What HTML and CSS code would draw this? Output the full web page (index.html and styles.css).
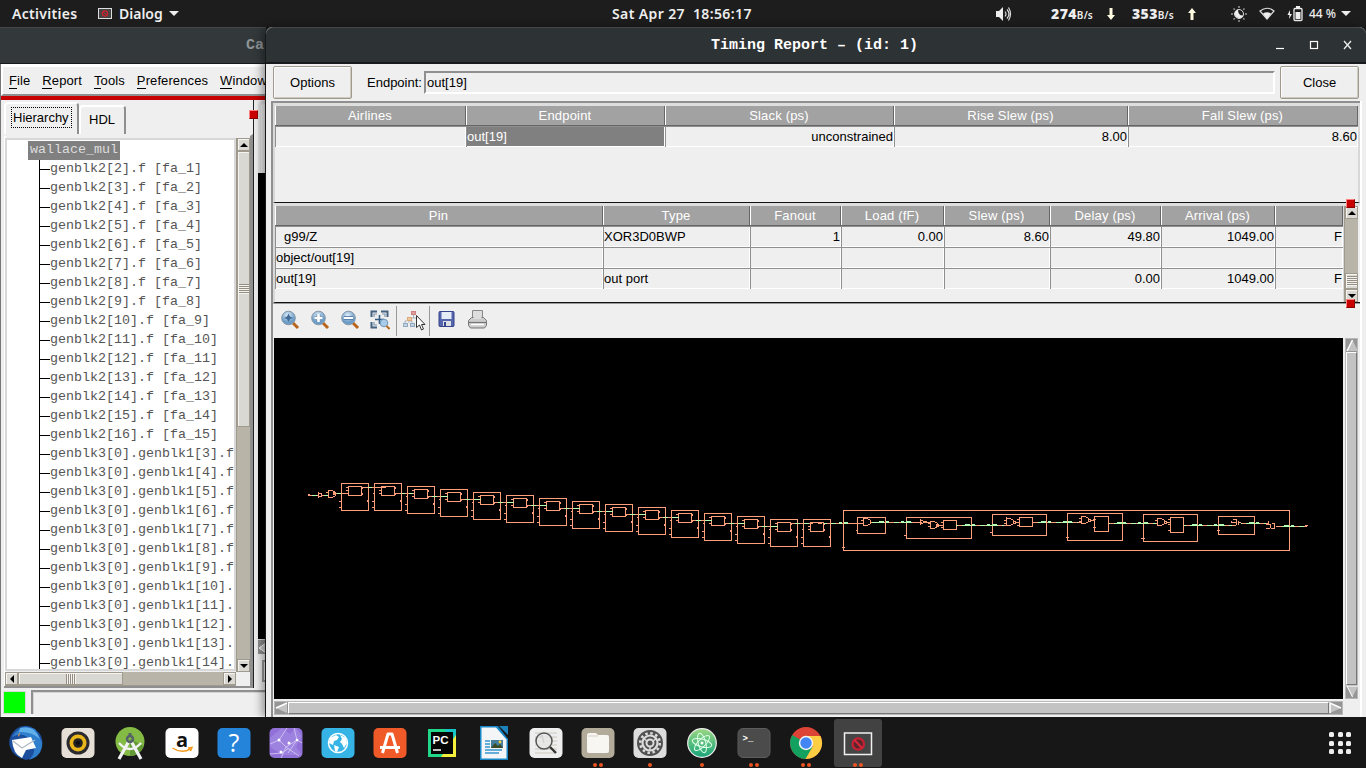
FILE: index.html
```html
<!DOCTYPE html>
<html lang="en">
<head>
<meta charset="utf-8">
<title>Timing Report</title>
<link rel="stylesheet" href="styles.css">
</head>
<body>
<div class="screen">
<header class="topbar">
  <span class="activities">Activities</span>
  <svg class="app-mini" width="14" height="12" viewBox="0 0 14 12"><rect x=".5" y=".5" width="13" height="10" fill="#444" stroke="#ddd"/><circle cx="7" cy="5.500" r="2.600" fill="none" stroke="#c8222b" stroke-width="1.400"/><path d="M5 4l4 3" stroke="#c8222b"/></svg>
  <span class="app-name">Dialog</span>
  <i class="caret"></i>
  <span class="clock">Sat Apr 27&nbsp; 18:56:17</span>
  <div class="tray">
    <svg width="16" height="14" viewBox="0 0 16 14"><path d="M0 4h3l4-4v14l-4-4H0z" fill="#eee"/><path d="M9 4.500q2 2.500 0 5M11 2.500q4 4.500 0 9M12.500 .5q4 6.500 0 13" fill="none" stroke="#ddd" stroke-width="1.200"/></svg>
    <span class="net net-down"><b>274</b><small>B/s</small></span>
    <svg class="arr1" width="8" height="12" viewBox="0 0 8 12"><path d="M2.500 0h3v7H8l-4 5-4-5h2.500z" fill="#fffbe0"/></svg>
    <span class="net net-up"><b>353</b><small>B/s</small></span>
    <svg class="arr2" width="8" height="12" viewBox="0 0 8 12"><path d="M2.500 12h3V5H8L4 0 0 5h2.500z" fill="#fffbe0"/></svg>
    <svg class="sun" width="16" height="16" viewBox="0 0 16 16"><circle cx="8" cy="8" r="4.500" fill="none" stroke="#ddd"/><path d="M7 3.500a4.500 4.500 0 1 0 5.500 6Q7 10 7 3.500z" fill="#eee"/><path d="M8 0v2M8 14v2M0 8h2M14 8h2M2.500 2.500l1.300 1.300M12.200 12.200l1.300 1.300M2.500 13.500l1.300-1.300M12.200 3.800l1.300-1.300" stroke="#999" stroke-width="1.500"/></svg>
    <svg class="wifi" width="16" height="13" viewBox="0 0 16 13"><path d="M1 4q7-5.500 14 0L8 12z" fill="none" stroke="#ddd" stroke-width="1.200"/><path d="M4 6.500q4-2.500 8 0L8 12z" fill="#eee"/></svg>
    <svg class="batt" width="16" height="16" viewBox="0 0 16 16"><path d="M3 4L.5 9h2L2 13l3-5H3z" fill="#eee"/><rect x="7" y="2.500" width="8" height="12" rx="1" fill="none" stroke="#eee" stroke-width="1.300"/><path d="M9 0h4v2H9zM8.500 6h5v7h-5z" fill="#eee"/></svg>
    <span class="pct">44 %</span>
    <i class="caret"></i>
  </div>
</header>

<section class="window back">
  <div class="titlebar"><span>Ca</span></div>
  <div class="back-body">
    <nav class="menubar"><span><u>F</u>ile</span><span><u>R</u>eport</span><span><u>T</u>ools</span><span><u>P</u>references</span><span><u>W</u>indow</span></nav>
    <div class="redbar"></div>
    <div class="back-split">
      <div class="left-pane">
        <div class="tabs"><div class="tab on"><span>Hierarchy</span></div><div class="tab off">HDL</div></div>
        <div class="tree-page">
          <div class="tree-col">
            <div class="tree"><div class="root">wallace_mul</div><ul>
<li>genblk2[2].f [fa_1]</li><li>genblk2[3].f [fa_2]</li><li>genblk2[4].f [fa_3]</li><li>genblk2[5].f [fa_4]</li><li>genblk2[6].f [fa_5]</li><li>genblk2[7].f [fa_6]</li><li>genblk2[8].f [fa_7]</li><li>genblk2[9].f [fa_8]</li><li>genblk2[10].f [fa_9]</li><li>genblk2[11].f [fa_10]</li><li>genblk2[12].f [fa_11]</li><li>genblk2[13].f [fa_12]</li><li>genblk2[14].f [fa_13]</li><li>genblk2[15].f [fa_14]</li><li>genblk2[16].f [fa_15]</li><li>genblk3[0].genblk1[3].f</li><li>genblk3[0].genblk1[4].f</li><li>genblk3[0].genblk1[5].f</li><li>genblk3[0].genblk1[6].f</li><li>genblk3[0].genblk1[7].f</li><li>genblk3[0].genblk1[8].f</li><li>genblk3[0].genblk1[9].f</li><li>genblk3[0].genblk1[10].</li><li>genblk3[0].genblk1[11].</li><li>genblk3[0].genblk1[12].</li><li>genblk3[0].genblk1[13].</li><li>genblk3[0].genblk1[14].</li></ul></div>
            <div class="hbar"><div class="sb"><svg width="6" height="8"><path d="M5 0v8L1 4z"/></svg></div><div class="hthumb"><i class="grip"></i></div><div class="fill"></div><div class="sb"><svg width="6" height="8"><path d="M1 0v8l4-4z"/></svg></div></div>
          </div>
          <div class="vbar"><div class="sb"><svg width="8" height="6"><path d="M0 5h8L4 1z"/></svg></div><div class="vthumb"><i class="grip v"></i></div><div class="fill"></div><div class="sb"><svg width="8" height="6"><path d="M0 1h8L4 5z"/></svg></div></div>
        </div>
      </div>
      <div class="right-pane"><div class="rp-top"></div><div class="rp-black"></div><div class="rp-arrow"><svg width="8" height="12"><path d="M8 1L1 6l7 5" fill="#ccc" stroke="#fff"/></svg></div><div class="rp-end"></div></div>
      <i class="sash back-sash"></i>
    </div>
    <div class="status"><i class="led"></i><div class="status-field"></div></div>
  </div>
</section>

<section class="window front">
  <div class="titlebar"><span>Timing Report – (id: 1)</span>
    <svg class="winbtns" width="78" height="12" viewBox="0 0 78 12"><path d="M1 9.500h8" stroke="#fff" stroke-width="1.200"/><rect x="35.500" y="2.500" width="7" height="7" fill="none" stroke="#fff" stroke-width="1.200"/><path d="M69 2l7 8M76 2l-7 8" stroke="#eee" stroke-width="1.300"/></svg>
  </div>
  <div class="front-body">
    <div class="controls"><button class="btn">Options</button><label>Endpoint:</label><div class="field">out[19]</div><button class="btn">Close</button></div>
    <div class="frame">
      <div class="pane p1">
        <div class="table t1">
          <b>Airlines</b><b>Endpoint</b><b>Slack (ps)</b><b>Rise Slew (ps)</b><b>Fall Slew (ps)</b>
          <span></span><span class="l sel">out[19]</span><span>unconstrained</span><span>8.00</span><span>8.60</span>
        </div>
      </div>
      <div class="pane p2">
        <div class="table t2">
          <b>Pin</b><b>Type</b><b>Fanout</b><b>Load (fF)</b><b>Slew (ps)</b><b>Delay (ps)</b><b>Arrival (ps)</b><b></b>
          <span class="l ind">g99/Z</span><span class="l">XOR3D0BWP</span><span>1</span><span>0.00</span><span>8.60</span><span>49.80</span><span>1049.00</span><span>F</span>
          <span class="l">object/out[19]</span><span></span><span></span><span></span><span></span><span></span><span></span><span></span>
          <span class="l">out[19]</span><span class="l">out port</span><span></span><span></span><span></span><span>0.00</span><span>1049.00</span><span>F</span>
        </div>
        <div class="vbar small"><div class="sb"><svg width="8" height="6"><path d="M0 5h8L4 1z"/></svg></div><div class="fill"></div><div class="vthumb"><i class="grip v"></i></div><div class="sb"><svg width="8" height="6"><path d="M0 1h8L4 5z"/></svg></div></div>
        <i class="sash s1"></i><i class="sash s2"></i>
      </div>
      <div class="toolbar">
        <svg width="20" height="20"><use href="#mag"/><path d="M8.500 3.500L10 6.500l3 1.500-3 1-1.500 3L7 9 4 8l3-1.500z" fill="#3f6a98"/></svg>
        <svg width="20" height="20"><use href="#mag"/><path d="M8.500 4v8M4.500 8h8" stroke="#5b84ab" stroke-width="4"/><path d="M8.500 4v8M4.500 8h8" stroke="#fff" stroke-width="2.600"/></svg>
        <svg width="20" height="20"><use href="#mag"/><path d="M4 8h9" stroke="#49749e" stroke-width="3.600"/><path d="M4 8h9" stroke="#fff" stroke-width="2"/></svg>
        <svg width="20" height="20"><path d="M1.500 7V1.500H7M11 1.500h6.500V7M1.500 12v5.500H7" fill="none" stroke="#44627f" stroke-width="2"/><path d="M4 7V4h3M12 4h3v3M4 12v3h3" fill="none" stroke="#7d97b0" stroke-width="1.200"/><path d="M9.500 5v9M5 9.500h9" stroke="#315b85" stroke-width="1.600"/><circle cx="14" cy="13" r="3.800" fill="#a8cbe8" stroke="#7097b9"/><path d="M16.500 16l3 3" stroke="#b96a20" stroke-width="2"/></svg>
        <i class="sep a"></i>
        <svg width="24" height="22"><path d="M10.500 5v3M6 8v5M6 8h9v4M4 11H2v3M7 11h2v3" fill="none" stroke="#a9b4be"/><rect x="8.500" y="1.500" width="4" height="3" fill="#df9a9a" stroke="#cd8383"/><rect x="4.500" y="7.500" width="4" height="3" fill="#efcaa0" stroke="#d9a97a"/><rect x=".5" y="13.500" width="4" height="3" fill="#c5d4e2" stroke="#91a9c0"/><rect x="7.500" y="13.500" width="4" height="3" fill="#c5d4e2" stroke="#91a9c0"/><path d="M13.500 5.500v12l3-2.500 2 5 2-1-2-4.500h3.500z" fill="#fff" stroke="#333"/></svg>
        <i class="sep b"></i>
        <svg width="18" height="18"><rect x="1" y="1.500" width="15" height="15" rx="1" fill="#5565ad" stroke="#34438b"/><path d="M3.500 2h10v7h-10z" fill="#e4edf6"/><path d="M5 11h8v5H5z" fill="#dcdfe4"/><path d="M6 12h2v4H6z" fill="#34438b"/></svg>
        <svg class="printer" width="22" height="20"><path d="M5.500 .5h10v9h-10z" fill="#ddd" stroke="#888"/><path d="M1.500 10.500l3-3h12l3 3v5l-2 2.500h-14l-2-2.500z" fill="#ccc" stroke="#777"/><path d="M6.500 2h8v7h-8z" fill="#ddd"/><path d="M2 12.500h17" stroke="#777" stroke-width="1.200"/><path d="M4 14.500h13" stroke="#fff" stroke-width="1.500"/></svg>
      </div>
      <div class="canvas-row">
        <svg class="schematic" width="1069" height="361" viewBox="274 338 1069 361" shape-rendering="crispEdges">
          <defs>
            <g id="blk" class="o"><path d="M.5.5h27v27h-27zM7.500 3.500h13v9h-13zM-2 18.500h3M-2 24.500h3M26.500 17v2M-1 10.500h2M5 4.500h2M5 7.500h2M5 10.500h2M20.500 4h1v2M21.500 10v2"/></g>
            <path id="w" d="M21 10.500h20"/>
            <path id="gate" d="M0 -3.500h5M5 -2.500h2M7.500 -2v4M5 2.500h2M0 3.500h5M.5 -3v6M-2 -1.500h2M-2 1.500h2"/>
            <path id="bubble" d="M.5 -1.500h2v2h-2z"/>
          </defs>
          <use href="#blk" x="341" y="483"/><use href="#blk" x="374" y="483"/><use href="#blk" x="407" y="486"/><use href="#blk" x="440" y="489"/><use href="#blk" x="473" y="492"/><use href="#blk" x="506" y="495"/><use href="#blk" x="539" y="498"/><use href="#blk" x="572" y="501"/><use href="#blk" x="605" y="504"/><use href="#blk" x="638" y="507"/><use href="#blk" x="671" y="510"/><use href="#blk" x="704" y="513"/><use href="#blk" x="737" y="516"/><use href="#blk" x="770" y="519"/><use href="#blk" x="803" y="519"/>
          <g class="o">
            <path d="M843.500 510.500h446v40h-446zM857.500 517.500h28v16h-28zM906.500 517.500h65v21h-65zM992.500 514.500h54v21h-54zM1067.500 513.500h55v27h-55zM1143.500 514.500h54v27h-54zM1218.500 516.500h36v18h-36z"/>
            <path d="M943.500 520.500h13v9h-13zM1019.500 517.500h13v9h-13zM1094.500 516.500h14v15h-14zM1170.500 517.500h13v15h-13z"/>
            <path d="M842 547.500h3M856 530.500h2M904 535.500h3M990 532.500h3M1066 537.500h3M1141 538.500h4M1217 530.500h3M941 522.500h3M941 527.500h3M1017 519.500h3M1017 525.500h3M1093 519.500h3M1093 527.500h3M1168 519.500h3M1168 524.500h3M1168 530.500h3"/>
            <path d="M308 494.500h2M308 495.500h10M318.500 492v6M319 493.500h2v3h-2M321 495.500h7M334 493.500h14M363 487.500h18M831 523.500h32M871 522.500h49M920.500 519v6M921 520.500h2M921 523.500h2M923 521.500h3v1h-3M926 522.500h5M939 525.500h4M956 525.500h51M1006.500 517v3M1016 522.500h3M1032 522.500h49M1091 520.500h3M1108 523.500h48M1167 522.500h3M1183 525.500h53M1236.500 525v-3M1241 523.500h27M1268.500 521v3M1276 526.500h31M1305 525.500h3"/>
            <use href="#gate" x="328" y="494"/><use href="#bubble" x="333" y="494"/>
            <use href="#gate" x="863" y="522"/>
            <use href="#gate" x="930" y="525"/><use href="#bubble" x="936" y="526"/>
            <use href="#gate" x="1006" y="522"/><use href="#bubble" x="1013" y="523"/>
            <use href="#gate" x="1081" y="520"/><use href="#bubble" x="1088" y="521"/>
            <use href="#gate" x="1157" y="522"/><use href="#bubble" x="1164" y="523"/>
            <path d="M1232.500 519.500h4v3h-5v-2M1236 519.500v2M1238.500 521v4M1239 522.500h2M1266 524.500h5M1270.500 524v4M1266 528.500h4M1272 523.500h2v5h-3"/>
          </g>
          <g class="g">
            <path d="M312 495.500h5M324 495.500h4M337 493.500h4M368 487.500h4M396 493.500h5M402 493.500h11"/>
            <use href="#w" x="407" y="486"/><use href="#w" x="440" y="489"/><use href="#w" x="473" y="492"/><use href="#w" x="506" y="495"/><use href="#w" x="539" y="498"/><use href="#w" x="572" y="501"/><use href="#w" x="605" y="504"/><use href="#w" x="638" y="507"/><use href="#w" x="671" y="510"/><use href="#w" x="704" y="513"/><use href="#w" x="737" y="516"/>
            <path d="M791 523.500h20M824 523.500h13M872 522.500h12M891 522.500h22M956 525.500h48M1034 522.500h12M1054 522.500h24M1109 523.500h47M1184 525.500h48M1241 523.500h25M1278 526.500h26"/>
            <path d="M839 523h3M844 523h4M879 522h5M886 522h3M901 522h3M906 522h5M965 525h5M972 525h3M987 525h3M992 525h5M1041 522h5M1048 522h3M1063 522h4M1068 522h4M1117 523h5M1123 523h3M1138 523h3M1144 523h4M1192 525h5M1199 525h3M1214 525h3M1219 525h5M1249 523h5M1256 523h3M1284 526h5M1291 526h3" stroke-width="2"/>
          </g>
          <g class="o" stroke-dasharray="4 5"><path d="M386 487.500h-20M396 493.500h17M428 496.500h18M461 499.500h18M494 502.500h18M527 505.500h18M560 508.500h18M593 511.500h18M626 514.500h18M659 517.500h18M692 520.500h18M725 523.500h18M758 526.500h18M791 523.500h46M890 522.500h11M912 522.500h10M958 525.500h6M976 525.500h10M998 525.500h8M1034 522.500h6M1052 522.500h10M1073 522.500h6M1110 523.500h6M1127 523.500h10M1149 523.500h7M1186 525.500h6M1203 525.500h10M1225 525.500h10M1242 523.500h6M1260 523.500h8M1278 526.500h6M1295 526.500h11"/></g>
        </svg>
        <div class="mbar mv"><svg width="13" height="13"><path d="M6.500 1L12 12H1z" fill="#c3c3c3"/><path d="M6.500 1L1 12" stroke="#fff" stroke-width="1.500"/></svg><i></i><svg width="13" height="13"><path d="M1 1h11L6.500 12z" fill="#c3c3c3"/><path d="M0 1h12M1 1l5.500 11" stroke="#fff"/></svg></div>
      </div>
      <div class="mbar mh"><svg width="13" height="12"><path d="M1 6L12 1v10z" fill="#c3c3c3"/><path d="M1 6l11-5" stroke="#fff" stroke-width="1.500"/></svg><i></i><svg width="13" height="12"><path d="M1 1v10l11-5z" fill="#c3c3c3"/><path d="M1 11V1l11 5" fill="none" stroke="#fff" stroke-width="1.500"/></svg></div>
    </div>
  </div>
</section>

<footer class="dock">
  <div class="app"><svg viewBox="0 0 36 36"><path d="M8 4Q18-3 28 5q8 6 6 17-3 11-16 13Q5 32 2 22-1 12 8 4z" fill="#1b4f9e"/><path d="M4 12Q12-1 27 4l7 13q1 14-13 18 8-8 4-18Q15 5 4 12z" fill="#2f7fcd"/><path d="M12 3q14-4 20 11-9-8-21-7z" fill="#62b0ea"/><path d="M10 10l2-3-1 5z" fill="#f0a050"/><path d="M4 15l19-3 5 11-10 2-4 8Q5 29 4 15z" fill="#fff"/><path d="M5 16l9 7 13-8" fill="none" stroke="#aeb9c5" stroke-width="1.200"/></svg></div>
  <div class="app"><svg viewBox="0 0 36 36"><rect x="1.500" y="3" width="33" height="30" rx="5" fill="#e6dfd5"/><circle cx="18" cy="18" r="11.500" fill="#2b2b2f"/><circle cx="18" cy="18" r="8.500" fill="#eab71b"/><circle cx="18" cy="18" r="4.800" fill="#222"/><circle cx="18" cy="18" r="2" fill="#0d0d16"/></svg></div>
  <div class="app"><svg viewBox="0 0 36 36"><circle cx="18" cy="16.500" r="14.500" fill="#83bb45"/><path d="M18 14l14 7q-5 10-14 10z" fill="#649a36"/><path d="M17 16L7 34M19 16l10 18" stroke="#f1f3f5" stroke-width="3.200"/><path d="M7 18q11 12 22 0" fill="none" stroke="#f1f3f5" stroke-width="2.400"/><circle cx="18" cy="14" r="3" fill="none" stroke="#566269" stroke-width="2.400"/><path d="M18 8v3" stroke="#566269" stroke-width="3"/></svg></div>
  <div class="app"><svg viewBox="0 0 36 36"><rect x="1.500" y="3" width="33" height="30" rx="5" fill="#fff"/><text x="18" y="22" class="amz">a</text><path d="M8.500 23q9 6 18 1M24 23l4-.5-1.500 3.500" fill="none" stroke="#f79b1c" stroke-width="1.500"/></svg></div>
  <div class="app"><svg viewBox="0 0 36 36"><rect x="1.500" y="3" width="33" height="30" rx="5" fill="#2484da"/><text x="18" y="27" class="help">?</text></svg></div>
  <div class="app"><svg viewBox="0 0 36 36"><rect x="1.500" y="3" width="33" height="30" rx="5" fill="#9170d8"/><path d="M2 13L14 3l8 6 6-6 6 8-6 11 6 8H15L2 22z" fill="#a991e8" opacity=".55"/><path d="M2 19l9-4 7 7 11-7 5 3M11 15l8-12M18 22l-5 11M18 22l13 9M29 15l-3-12M29 15l-9 13M2 29l12-1 7-5" stroke="#cdbef2" fill="none"/><g fill="#fff"><circle cx="11" cy="15" r="1.500"/><circle cx="21" cy="18" r="1.500"/><circle cx="29" cy="15" r="1.300"/><circle cx="13" cy="27" r="1.500"/></g></svg></div>
  <div class="app"><svg viewBox="0 0 36 36"><rect x="1.500" y="3" width="33" height="30" rx="5" fill="#35b4e5"/><circle cx="18" cy="18" r="9.500" fill="none" stroke="#fff" stroke-width="1.500"/><path d="M10 13l6-3 3 2-2 3-3 1-1 4-4-2zM14 20l5 2-2 5-2-1zM20 10l6 3 1 5-3 5-2-4-2-2 2-3z" fill="#fff"/></svg></div>
  <div class="app"><svg viewBox="0 0 36 36"><rect x="1.500" y="3" width="33" height="30" rx="5" fill="#f05a28"/><path d="M10.500 28l5.500-19h4l5.500 19M8 22.500h20" fill="none" stroke="#fff" stroke-width="3" stroke-linejoin="round"/></svg></div>
  <div class="app"><svg viewBox="0 0 36 36"><path d="M4 4h28v28H4z" fill="#21d789"/><path d="M20 4h12v14z" fill="#17c5c7"/><path d="M32 10v22H17z" fill="#f4ee3c"/><path d="M7 7h22v22H7z" fill="#050505"/><text x="8.500" y="18.500" class="pc">PC</text><path d="M9 25h8" stroke="#fff" stroke-width="1.500"/></svg></div>
  <div class="app"><svg viewBox="0 0 36 36"><path d="M4 1h18l10 13v21H4z" fill="#1786c6"/><path d="M5.500 2.500H20l10.500 12v19h-25z" fill="#f3f5f6"/><path d="M23 1h9v9z" fill="#1a82bd"/><path d="M9 16h5M9 19h5M9 22h5M9 25h17M9 28h14" stroke="#3695cf" stroke-width="1.300"/><path d="M15 15h12v8H15z" fill="#467e9e"/><path d="M15 23l4-5 3 3 2-2 3 4z" fill="#3a4b25"/><circle cx="24" cy="17" r="1.400" fill="#f1d33c"/></svg></div>
  <div class="app"><svg viewBox="0 0 36 36"><rect x="1.500" y="3" width="33" height="30" rx="5" fill="#eee"/><path d="M7 8h22M7 12h22M7 16h22M7 20h22M7 24h22M7 28h20" stroke="#ccc8bb"/><circle cx="16" cy="16" r="8" fill="#e6e6e6" fill-opacity=".85" stroke="#555" stroke-width="1.500"/><path d="M22 22l6 6" stroke="#333" stroke-width="2.400"/><path d="M12 13l2-3 2 8" fill="none" stroke="#ccc"/></svg></div>
  <div class="app"><svg viewBox="0 0 36 36"><rect x="1.500" y="3" width="33" height="30" rx="5" fill="#b3ab99"/><path d="M7 11q0-3 2-3h7l2 2h9q2 0 2 2v14q0 2-2 2H9q-2 0-2-2z" fill="#f8f6f3"/><path d="M8 11h10" stroke="#d6d0c4"/></svg><em></em><em></em></div>
  <div class="app"><svg viewBox="0 0 36 36"><rect x="1.500" y="3" width="33" height="30" rx="5" fill="#ddd"/><circle cx="18" cy="18" r="13" fill="#505050"/><circle cx="18" cy="18" r="9.800" fill="none" stroke="#ddd" stroke-width="2.500" stroke-dasharray="2.500 2.630"/><circle cx="18" cy="18" r="7.500" fill="#505050" stroke="#ddd" stroke-width="2.200"/><circle cx="18" cy="18" r="3.500" fill="none" stroke="#ddd" stroke-width="2"/><path d="M18 21v5M15 16l-4-3M21 16l4-3" stroke="#ddd" stroke-width="1.500"/></svg><em></em></div>
  <div class="app"><svg viewBox="0 0 36 36"><defs><linearGradient id="at" x2="0" y2="1"><stop stop-color="#9bd783"/><stop offset="1" stop-color="#16a47a"/></linearGradient></defs><circle cx="18" cy="18" r="14.300" fill="url(#at)" stroke="#eee" stroke-width="1.200"/><g fill="none" stroke="#dfffe9"><ellipse cx="18" cy="18" rx="3.800" ry="10" transform="rotate(-15 18 18)"/><ellipse cx="18" cy="18" rx="3.800" ry="10" transform="rotate(45 18 18)"/><ellipse cx="18" cy="18" rx="3.800" ry="10" transform="rotate(105 18 18)"/></g><circle cx="18" cy="18" r="1.500" fill="#fff"/></svg><em></em></div>
  <div class="app"><svg viewBox="0 0 36 36"><rect x="2" y="3.500" width="32" height="29" rx="5" fill="#4b4b4b" stroke="#5d5d5d"/><text x="6.500" y="16" class="term">&gt;_</text></svg><em></em><em></em></div>
  <div class="app"><svg viewBox="0 0 36 36"><circle cx="18" cy="18" r="16" fill="#dd4436"/><path d="M18 18L4.200 10A16 16 0 0 0 17.500 34L25 22z" fill="#12a15e"/><path d="M18 11h14.500A16 16 0 0 1 17.500 34L25 21z" fill="#ffce42"/><circle cx="18" cy="18" r="7.200" fill="#f4f4f4"/><circle cx="18" cy="18" r="5.700" fill="#4285f4"/></svg><em></em><em></em></div>
  <div class="app active"><svg viewBox="0 0 36 36"><rect x="4.500" y="8" width="27" height="21.500" fill="#454545" stroke="#f1f1f1" stroke-width="1.500"/><circle cx="18.300" cy="19" r="5.700" fill="#5b252b" stroke="#c92034" stroke-width="2.200"/><path d="M14.500 15l7.500 8" stroke="#d5283a" stroke-width="2.200"/></svg><em></em><em></em></div>
  <div class="grid9"><i></i><i></i><i></i><i></i><i></i><i></i><i></i><i></i><i></i></div>
</footer>
</div>
<svg width="0" height="0" class="library"><defs><radialGradient id="lens" cx=".45" cy=".3"><stop stop-color="#e4f0fa"/><stop offset="1" stop-color="#6d9cc7"/></radialGradient><g id="mag"><path d="M12 12l6 6" stroke="#ba641b" stroke-width="3"/><circle cx="8.500" cy="8" r="6.800" fill="url(#lens)" stroke="#8598a8"/></g></defs></svg>
</body>
</html>
```
FILE: styles.css
```css
* { box-sizing: border-box; }
body { margin: 0; background: #171717; font: 13px/16px "Liberation Sans", Arial, sans-serif; color: #000; }
i, em { display: block; font-style: normal; }
svg { display: block; flex: none; }
.screen { position: relative; width: 1366px; height: 768px; overflow: hidden; display: flex; flex-direction: column; }
.library { position: absolute; }

.topbar { height: 27px; background: #1d1d1d; color: #eee; display: flex; align-items: center; padding: 0 15px 0 12px; font: 600 14px/27px "Noto Sans", sans-serif; white-space: pre; }
.activities { width: 86px; letter-spacing: .3px; }
.app-mini { margin-right: 7px; }
.app-name { width: 44px; }
.caret { border: 5px solid transparent; border-top-color: #eee; border-bottom: 0; margin-left: 6px; }
.clock { margin-left: 433px; width: 150px; letter-spacing: .38px; }
.tray { display: flex; align-items: center; margin-left: auto; }
.net { font-size: 14px; margin-left: 39px; display: flex; align-items: baseline; letter-spacing: .4px; padding-top: 1px; }
.net small { font-size: 10px; letter-spacing: .2px; }
.net-up { margin-left: 17px; }
.arr1 { margin-left: 14px; }
.arr2 { margin-left: 14px; }
.sun { margin-left: 35px; }
.wifi { margin-left: 12px; }
.batt { margin-left: 12px; }
.pct { font-size: 12px; margin-left: 6px; font-weight: 500; }
.tray .caret { margin-left: 5px; }

.window { position: absolute; top: 27px; height: 690px; display: flex; flex-direction: column; }
.back { left: 0; width: 266px; overflow: hidden; }
.front { left: 265px; width: 1101px; border-left: 1px solid #15191a; border-radius: 7px 7px 0 0; box-shadow: -3px 0 10px rgba(0,0,0,.4); background: #efefef; }
.titlebar { height: 37px; flex: none; background: #2d3234; border-top: 1px solid #42484a; border-bottom: 2px solid #17191a; display: flex; align-items: center; justify-content: center; color: #fff; font: bold 15px/34px "Liberation Mono", monospace; position: relative; white-space: pre; }
.titlebar span { padding-top: 1px; }
.front .titlebar { border-radius: 7px 7px 0 0; padding-right: 3px; }
.back .titlebar { background: #33393b; color: #8e9496; justify-content: flex-end; padding-right: 2px; border-bottom-width: 1px; }
.winbtns { position: absolute; right: 13px; top: 11px; }

.back-body { flex: 1; border-left: 1px solid #777; background: #efefef; display: flex; flex-direction: column; }
.menubar { height: 32px; border: 2px solid #fff; border-width: 3px 0 0 2px; border-bottom: 2px solid #8f8f8f; display: flex; gap: 12px; padding: 5px 0 0 6px; line-height: 18px; white-space: nowrap; letter-spacing: .1px; }
.menubar u { text-decoration: none; box-shadow: 0 1px #000; }
.redbar { height: 4px; background: #c80000; }
.back-split { display: flex; height: 588px; position: relative; }
.left-pane { width: 253px; padding: 2px 0 0 3px; border-right: 1px solid #222; display: flex; flex-direction: column; }
.tabs { display: flex; height: 32px; align-items: flex-end; }
.tab { border: 2px solid #fff; border-right-color: #8f8f8f; border-bottom: 0; border-radius: 4px 4px 0 0; }
.tab.on { width: 75px; height: 32px; padding: 3px 0 0 5px; }
.tab.on span { display: block; width: 61px; height: 21px; border: 1px dotted #000; padding-left: 1px; line-height: 20px; }
.tab.off { width: 47px; height: 29px; padding: 5px 0 0 8px; box-shadow: 0 2px #fff; }
.tree-page { display: flex; height: 554px; border-right: 3px solid #8f8f8f; border-bottom: 2px solid #8f8f8f; border-top: 2px solid #efefef; padding-top: 2px; }
.tabs + .tree-page { box-shadow: inset 2px 0 #fff; }
.tree-col { width: 232px; padding-left: 1px; }
.tree { height: 533px; border: 2px solid #d8d8d8; background: #fff; overflow: hidden; padding: 1px 0 0 21px; font: 13.333px/18px "Liberation Mono", monospace; color: #555; }
.root { background: #808080; color: #ddd; width: 92px; height: 19px; padding-left: 2px; }
.tree ul { list-style: none; margin: 0 0 0 11px; padding: 0; border-left: 1px solid #000; }
.tree li { height: 19px; display: flex; white-space: pre; }
.tree li::before { content: ""; width: 10px; height: 1px; background: #000; margin-top: 9px; }
.sb, .hthumb, .vthumb { background: #dad8d2; border: 1px solid #a09a8e; box-shadow: inset 1px 1px #f5f4f1; flex: none; display: flex; align-items: center; justify-content: center; }
.sb { width: 13px; height: 13px; }
.fill { flex: 1; background: #b9b4a8; }
.hbar { display: flex; height: 14px; margin-top: 1px; border: 1px solid #a09a8e; border-width: 0 0 1px; }
.hthumb { width: 105px; }
.vbar { width: 14px; height: 534px; display: flex; flex-direction: column; border-left: 1px solid #a09a8e; background: #b9b4a8; }
.vthumb { height: 276px; width: 13px; }
.grip { width: 10px; height: 10px; background: repeating-linear-gradient(90deg, #948e82 0 1px, #f5f4f1 1px 2px); }
.grip.v { background: repeating-linear-gradient(#948e82 0 1px, #f5f4f1 1px 2px); }
.right-pane { flex: 1; padding: 1px 0 0 4px; }
.rp-top { height: 72px; border: 3px solid #e0e0e0; border-right: 0; border-bottom: 0; border-radius: 5px 0 0; }
.rp-black { height: 466px; background: #000; }
.rp-arrow { height: 15px; padding: 2px 0; background: #8f8f8f; border-top: 1px solid #ddd; }
.rp-end { margin: 6px 0 0 4px; height: 22px; border: 2px solid #999; border-right: 0; }
.sash { position: absolute; width: 9px; height: 9px; background: #c80000; border: 1px solid #ff8080; border-right-color: #8b0000; border-bottom-color: #8b0000; z-index: 2; }
.back-sash { left: 248px; top: 10px; }
.status { flex: 1; display: flex; padding: 2px 0 2px 2px; border-bottom: 1px solid #fff; }
.led { width: 23px; height: 23px; background: #0f0; border: 1px solid #d9d9d9; margin-top: 1px; }
.status-field { flex: 1; margin-left: 5px; border: 2px solid #8f8f8f; border-width: 2px 0 0 2px; box-shadow: inset 1px 1px #d4d4d4; }

.front-body { flex: 1; padding: 0 4px 0 5px; border-right: 0; display: flex; flex-direction: column; }
.controls { height: 37px; display: flex; padding: 2px 3px 2px 2px; align-items: flex-start; }
.btn { width: 79px; height: 33px; background: #efefef; border: 1px solid #a09a8e; border-radius: 2px; box-shadow: inset 1px 1px #fafafa, inset -1px -1px #cfcac0; font: 13px "Liberation Sans", sans-serif; color: #000; padding: 0; }
.controls label { width: 57px; margin-left: 15px; line-height: 33px; }
.field { width: 851px; height: 23px; margin: 5px 5px 0 0; border: 2px solid #8f8f8f; border-right-color: #fff; border-bottom-color: #fff; line-height: 19px; padding-left: 1px; }
.frame { width: 1089px; height: 616px; border: 2px solid #8f8f8f; border-width: 2px 0 0 2px; display: flex; flex-direction: column; box-shadow: 2px 0 #fff; }
.pane { border-left: 2px solid #d8d8d8; border-top: 3px solid #dedede; border-bottom: 1px solid #111; position: relative; display: flex; }
.p1 { height: 100px; border-right: 2px solid #d8d8d8; }
.p2 { height: 100px; }
.table { display: grid; align-content: start; width: 1083px; grid-template-rows: 20px; grid-auto-rows: 21px; line-height: 20px; white-space: pre; }
.t1 { grid-template-columns: 191px 199px 229px 234px 1fr; }
.t2 { width: 1069px; grid-template-columns: 328px 147px 91px 103px 106px 111px 114px 1fr; border-right: 1px solid #d8d8d8; }
.table b { font-weight: 400; background: #a2a2a2; color: #fff; text-align: center; letter-spacing: .18px; border-right: 1px solid #666; border-bottom: 1px solid #666; box-shadow: inset 1px 0 #fff; }
.table span { border-left: 1px solid #8f8f8f; border-top: 1px solid #8f8f8f; box-shadow: inset -1px -1px #fff; text-align: right; padding-right: 1px; height: 21px; line-height: 19px; }
.table .l { text-align: left; padding-left: 0; }
.table .ind { padding-left: 8px; }
.table .sel { background: #808080; color: #fff; }
.vbar.small { width: 14px; height: 96px; }
.small .vthumb { height: 16px; }
.s1 { left: 1071px; top: -7px; }
.s2 { left: 1071px; top: 93px; }
.toolbar { height: 35px; display: flex; align-items: flex-start; padding: 6px 0 0 7px; gap: 10px; border-top: 1px solid #999; }
.sep { width: 1px; height: 30px; background: #999; margin-top: -4px; }
.sep.a { margin-left: -4px; margin-right: -4px; }
.sep.b { margin-left: -8px; margin-right: -2px; }
.printer { margin-left: 1px; }
.canvas-row { display: flex; height: 361px; padding-left: 1px; }
.schematic { background: #000; }
.schematic .o, .schematic .g { fill: none; stroke: #ffa07a; }
.schematic .g { stroke: #b4ffb4; }
.mbar { background: #959595; border: 1px solid #b8b8b8; display: flex; }
.mbar i { flex: 1; background: #c3c3c3; border: 1px solid #fff; border-right-color: #777; border-bottom-color: #777; }
.mv { width: 13px; flex-direction: column; margin-left: 2px; }
.mh { width: 1069px; height: 14px; margin: 2px 0 0 1px; }

.dock { position: absolute; left: 0; top: 717px; width: 1366px; height: 51px; background: #171717; display: flex; }
.app { width: 52px; height: 51px; padding-top: 8px; display: flex; flex-wrap: wrap; justify-content: center; align-content: flex-start; gap: 0 2px; }
.app svg { width: 36px; height: 36px; margin: 0 8px; }
.app em { width: 4px; height: 4px; border-radius: 2px; background: #e95420; margin-top: 2px; }
.active { width: 48px; height: 48px; margin: 2px 0 0 2px; padding-top: 6px; background: #424242; border-radius: 3px; }
.active svg { margin: 0 6px; }
.dock text { fill: #fff; font-family: "Open Sans", sans-serif; }
.dock .amz { font: bold 20px "Open Sans", sans-serif; fill: #111; text-anchor: middle; }
.dock .help { font-size: 25px; text-anchor: middle; }
.dock .pc { font: bold 11.500px "Liberation Sans", sans-serif; }
.dock .term { font: bold 9px "Liberation Mono", monospace; }
.grid9 { margin: 15px 15px 0 auto; display: grid; grid-template-columns: repeat(3, 5px); grid-auto-rows: 5px; gap: 3.500px; height: 22px; }
.grid9 i { background: #eee; border-radius: 1.500px; }
```
